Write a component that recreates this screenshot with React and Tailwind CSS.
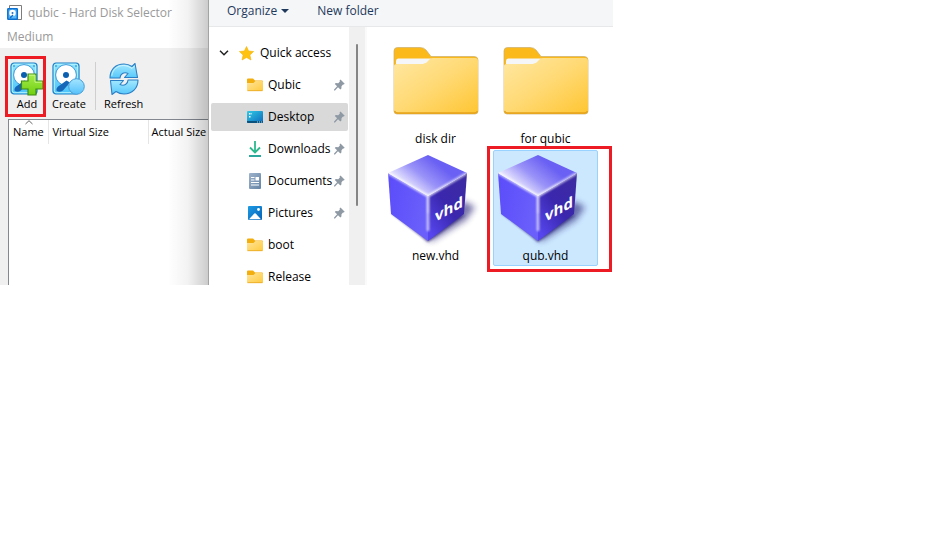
import { useId, useState } from "react";

function DiskGlyph() {
  return (
    <g>
      <rect x="1" y="1" width="26" height="31" rx="3" fill="url(#diskFace)" stroke="#1a7cc4" strokeWidth="1.2" />
      <rect x="2.3" y="2.3" width="23.4" height="28.4" rx="2" fill="none" stroke="#b5f4ff" strokeWidth="1" />
      <circle cx="14" cy="13" r="10.4" fill="#fff" stroke="#3e9bdc" strokeWidth="1" />
      <circle cx="14" cy="13" r="3" fill="#0b5fb0" />
      <path d="M14.5 18.5 18 20.5 11 28.5 Q7 31 4.5 28.5 Q4 25.5 7.5 23.5Z" fill="#1767b8" />
      <circle cx="4" cy="4" r=".7" fill="#0b62ae" />
      <circle cx="24" cy="4" r=".7" fill="#0b62ae" />
      <defs>
        <linearGradient id="diskFace" x1="0" y1="0" x2="0" y2="1">
          <stop offset="0" stopColor="#8fe6ff" />
          <stop offset="1" stopColor="#4cc3fa" />
        </linearGradient>
      </defs>
    </g>
  );
}

function AddIcon() {
  return (
    <svg width="34" height="34" viewBox="0 0 34 34" className="shrink-0" aria-hidden="true">
      <DiskGlyph />
      <path d="M18 12h8v7h7v8h-7v6h-8v-6h-6.500v-8H18Z" fill="url(#plus)" stroke="#3c8c14" strokeWidth="1.2" />
      <path d="M19 13.200h6v7h7" fill="none" stroke="#c9f78b" strokeWidth="1" />
      <defs>
        <linearGradient id="plus" x1="0" y1="0" x2="0" y2="1">
          <stop offset="0" stopColor="#a6ec4e" />
          <stop offset="1" stopColor="#6fd00f" />
        </linearGradient>
      </defs>
    </svg>
  );
}

function CreateIcon() {
  return (
    <svg width="34" height="34" viewBox="0 0 34 34" className="shrink-0" aria-hidden="true">
      <DiskGlyph />
      <circle cx="24.500" cy="24.500" r="7.800" fill="url(#ball)" stroke="#4a9fd8" strokeWidth="1" />
      <defs>
        <linearGradient id="ball" x1="0" y1="0" x2="0" y2="1">
          <stop offset="0" stopColor="#a5e6ff" />
          <stop offset="1" stopColor="#55c0fa" />
        </linearGradient>
      </defs>
    </svg>
  );
}

function RefreshIcon() {
  return (
    <svg width="34" height="34" viewBox="0 0 34 34" className="shrink-0" aria-hidden="true">
      <g fill="url(#arrows)" stroke="#2b7fc4" strokeWidth="1.1" strokeLinejoin="round">
        <path d="M3 16C3 7 9 2 17 2c3 0 5.500 .8 8 2.500L28 1.500 30.500 15.500H17.500l3.500-4c-4-2-8 .5-8 4.500Z" />
        <path d="M31 18C31 26.500 25 32 17 32c-3 0-5.500-.8-8-2.500L5 32.500 3.500 18.500H16.500L13 22.500c4 2 8-.5 8-4.500Z" />
      </g>
      <path d="M4.800 13.800C5.500 7.500 10.500 3.500 16.500 3.500c3.500 0 6 1.500 8.500 3l2.500-2.500" fill="none" stroke="#d6f6ff" strokeWidth=".9" />
      <defs>
        <linearGradient id="arrows" x1="0" y1="0" x2="0" y2="1">
          <stop offset="0" stopColor="#a5e9ff" />
          <stop offset="1" stopColor="#56c8fb" />
        </linearGradient>
      </defs>
    </svg>
  );
}

function AppIcon() {
  return (
    <svg width="16" height="17" viewBox="0 0 16 17" className="shrink-0" aria-hidden="true">
      <path d="M3.500.500h12v14h-12Z" fill="#fff" stroke="#7d7d7d" />
      <rect x="1.800" y="3.800" width="9.500" height="10.500" rx=".5" fill="#5db9f5" stroke="#0b6fd0" strokeWidth="1.500" />
      <circle cx="6.500" cy="8" r="3.200" fill="#fff" />
      <circle cx="6.500" cy="8" r="1" fill="#1b75d0" />
      <path d="M7 10 4 13" stroke="#0b6fd0" strokeWidth="1.500" />
    </svg>
  );
}

function SmallFolder() {
  return (
    <svg width="16" height="14" viewBox="0 0 16 14" className="shrink-0" aria-hidden="true">
      <path d="M0 1.500Q0 .500 1 .500H6L8 2.500H15Q16 2.500 16 3.500V12H0Z" fill="#f1ae0e" />
      <path d="M0 5H6.500L8.500 3H15Q16 3 16 4V12Q16 13 15 13H1Q0 13 0 12Z" fill="url(#smallFolder)" />
      <path d="M.500 12.700H15.500" stroke="#e7a620" strokeWidth=".8" />
      <defs>
        <linearGradient id="smallFolder" x1="0" y1="0" x2="1" y2="1">
          <stop offset="0" stopColor="#ffe49a" />
          <stop offset="1" stopColor="#ffca3e" />
        </linearGradient>
      </defs>
    </svg>
  );
}

function DesktopIcon() {
  return (
    <svg width="16" height="14" viewBox="0 0 16 14" className="shrink-0" aria-hidden="true">
      <rect y="1" width="16" height="12" rx="1" fill="url(#desktop)" />
      <path d="M2 3h1.500v1.500H2ZM2 6h1.500v1.500H2ZM4.500 3H5v1.500h-.500Z" fill="#fff" />
      <path d="M0 11H16V12Q16 13 15 13H1Q0 13 0 12Z" fill="#0c527f" />
      <path d="M10 12h1M12 12h1M14 12h1" stroke="#9bdcf5" />
      <defs>
        <linearGradient id="desktop" x1="0" y1="0" x2="1" y2="1">
          <stop offset="0" stopColor="#31cbe4" />
          <stop offset="1" stopColor="#0c69bd" />
        </linearGradient>
      </defs>
    </svg>
  );
}

function DownloadsIcon() {
  return (
    <svg width="16" height="16" viewBox="0 0 16 16" fill="none" className="shrink-0" aria-hidden="true">
      <path d="M8 0V11M3 6.500 8 11.500 13 6.500" stroke="#2cb98d" strokeWidth="1.800" />
      <path d="M2 15H14" stroke="#159f92" strokeWidth="1.800" />
    </svg>
  );
}

function DocumentsIcon() {
  return (
    <svg width="16" height="16" viewBox="0 0 16 16" className="shrink-0" aria-hidden="true">
      <rect x="2" width="12" height="16" rx="1" fill="url(#docs)" />
      <path d="M4 4.500h3.500M4 7h3.500M4 9.500h8M4 12h8" stroke="#fff" />
      <rect x="8.500" y="4" width="3.500" height="3.500" fill="#fff" />
      <defs>
        <linearGradient id="docs" x1="0" y1="0" x2="1" y2="1">
          <stop offset="0" stopColor="#9eb3cb" />
          <stop offset="1" stopColor="#6584a6" />
        </linearGradient>
      </defs>
    </svg>
  );
}

function PicturesIcon() {
  return (
    <svg width="16" height="16" viewBox="0 0 16 16" className="shrink-0" aria-hidden="true">
      <rect x="1" y="1" width="14" height="14" rx="1" fill="url(#pics)" />
      <path d="M2 14.200 7.300 8.600Q8 8 8.700 8.600L14 14.200Z" fill="#fff" />
      <circle cx="11.500" cy="4.500" r="1.400" fill="#fff" />
      <defs>
        <linearGradient id="pics" x1="0" y1="0" x2="1" y2="1">
          <stop offset="0" stopColor="#1d9be4" />
          <stop offset="1" stopColor="#0763b8" />
        </linearGradient>
      </defs>
    </svg>
  );
}

function StarIcon() {
  return (
    <svg width="15" height="15" viewBox="0 0 15 15" className="shrink-0" aria-hidden="true">
      <path d="M7.500.500 9.600 5 14.600 5.500 10.900 9 12 14 7.500 11.500 3 14 4.100 9 .400 5.500 5.400 5Z" fill="#ffc20e" stroke="#f2b30b" strokeWidth=".6" />
    </svg>
  );
}

function PinIcon() {
  return (
    <svg width="11" height="12" viewBox="0 0 11 12" className="shrink-0" aria-hidden="true">
      <path d="M6.500.500 10.700 4.700 9.800 5.600 9 5.500 7.500 7.300 7.400 9.600 6.400 10.400 4 8.200 1 11.400 0 11.600.100 10.600 3.100 7.300.800 5.100 1.700 4.100 4.200 4.200 5.900 2.500 5.600 1.400Z" fill="#8e99a4" />
    </svg>
  );
}

function BigFolder() {
  return (
    <svg width="96" height="96" viewBox="0 0 96 96" className="shrink-0" aria-hidden="true">
      <path d="M6 17Q6 13.500 9.500 13.500H32Q36 13.500 38 16L43 22.500H86Q90 22.500 90 26V77Q90 80 87 80H9Q6 80 6 77Z" fill="#fbb91a" stroke="#c9ae70" strokeWidth=".7" />
      <path d="M8 27Q8 24.500 10 24.500H43Q40 30 35 30H8Z" fill="#f5f6f8" />
      <path d="M6 32Q6 30 9 30H35Q38 30 40 27L42 25Q43 24 45 24H87Q90 24 90 27V76Q90 79 87 79H9Q6 79 6 76Z" fill="url(#bigFolder)" />
      <path d="M6.500 77Q7.500 79 9.500 79H86.500Q88.500 79 89.500 77" fill="none" stroke="#e6a31b" strokeWidth="1.400" />
      <defs>
        <linearGradient id="bigFolder" x1="0" y1="0" x2="1" y2="1">
          <stop offset="0" stopColor="#ffe8a3" />
          <stop offset=".5" stopColor="#ffd973" />
          <stop offset="1" stopColor="#ffc633" />
        </linearGradient>
      </defs>
    </svg>
  );
}

function VhdCube() {
  const id = useId();
  const ref = (name) => `url(#${id}${name})`;
  return (
    <svg width="96" height="96" viewBox="0 0 96 96" className="shrink-0" aria-hidden="true">
      <defs>
        <linearGradient id={id + "top"} gradientUnits="userSpaceOnUse" x1="20" y1="38" x2="44" y2="8">
          <stop offset="0" stopColor="#f1efff" />
          <stop offset=".5" stopColor="#9a93f8" />
          <stop offset="1" stopColor="#6a60f3" />
        </linearGradient>
        <linearGradient id={id + "left"} x1="0" y1="0" x2="1" y2=".3">
          <stop offset="0" stopColor="#5b4cfa" />
          <stop offset="1" stopColor="#6a5ffb" />
        </linearGradient>
        <linearGradient id={id + "right"} x1="1" y1="0" x2=".2" y2="1">
          <stop offset="0" stopColor="#3c2ba0" />
          <stop offset=".55" stopColor="#3a27ae" />
          <stop offset="1" stopColor="#5646ed" />
        </linearGradient>
        <filter id={id + "blur"} x="-30%" y="-30%" width="160%" height="160%">
          <feGaussianBlur stdDeviation="3" />
        </filter>
        <filter id={id + "soft"} x="-30%" y="-30%" width="160%" height="160%">
          <feGaussianBlur stdDeviation="1.2" />
        </filter>
        <clipPath id={id + "body"}>
          <path d="M40 4 79 22 76 63 40 90 3 63 0 22Z" />
        </clipPath>
      </defs>
      <path d="M76 50 87 56 78 69 44 90 38 88Z" fill="#231a72" opacity=".6" filter={ref("blur")} />
      <path d="M3 62 40 91 77 64 40 70Z" fill="#231a72" opacity=".7" filter={ref("soft")} />
      <path d="M0 22 40 45V90L3 63Z" fill={ref("left")} />
      <path d="M79 22 40 45V90L76 63Z" fill={ref("right")} />
      <path d="M40 4 79 22 40 45 0 22Z" fill={ref("top")} />
      <g clipPath={ref("body")}>
        <path d="M0 22 40 45 79 22M40 45V80" fill="none" stroke="#fff" strokeWidth="2.500" opacity=".7" filter={ref("soft")} />
        <path d="M20 33.500 40 45 60 33M40 45V62" fill="none" stroke="#fff" strokeWidth="1" opacity=".6" filter={ref("soft")} />
      </g>
      <text transform="translate(47 71) skewY(-29)" fill="#fff" fontFamily="Open Sans, sans-serif" fontSize="15" fontWeight="700">
        vhd
      </text>
    </svg>
  );
}

const places = [
  { label: "Qubic", Icon: SmallFolder, pinned: true },
  { label: "Desktop", Icon: DesktopIcon, pinned: true },
  { label: "Downloads", Icon: DownloadsIcon, pinned: true },
  { label: "Documents", Icon: DocumentsIcon, pinned: true },
  { label: "Pictures", Icon: PicturesIcon, pinned: true },
  { label: "boot", Icon: SmallFolder },
  { label: "Release", Icon: SmallFolder },
];

const files = [
  { name: "disk dir", Icon: BigFolder },
  { name: "for qubic", Icon: BigFolder },
  { name: "new.vhd", Icon: VhdCube },
  { name: "qub.vhd", Icon: VhdCube, marked: true },
];

function ToolButton({ label, Icon }) {
  return (
    <button className="flex flex-col items-center text-[11px]">
      <Icon />
      <span className="leading-4">{label}</span>
    </button>
  );
}

function SelectorWindow() {
  return (
    <section className="relative flex w-[208px] shrink-0 flex-col overflow-hidden bg-[#f0f0f0]">
      <header className="flex h-[26px] shrink-0 items-center gap-1.5 bg-white pl-1.5 text-[#999]">
        <AppIcon />
        <h1 className="whitespace-nowrap">qubic - Hard Disk Selector</h1>
      </header>
      <nav className="flex h-[22px] shrink-0 items-center bg-white pl-[7px] text-[#999]">
        <button>Medium</button>
      </nav>
      <div className="flex h-[71px] shrink-0 pt-3.5">
        <div className="relative w-[46px] pl-2.5">
          <ToolButton label="Add" Icon={AddIcon} />
          <div className="pointer-events-none absolute -top-1.5 left-[5px] h-[61px] w-[41px] border-3 border-[#ed1c24]" />
        </div>
        <div className="w-12 pl-1.5">
          <ToolButton label="Create" Icon={CreateIcon} />
        </div>
        <div className="ml-px h-12 w-px bg-[#cfcfcf]" />
        <div className="pl-2">
          <ToolButton label="Refresh" Icon={RefreshIcon} />
        </div>
      </div>
      <div className="ml-2 flex-1 border-t border-l border-[#828790] bg-white">
        <table className="w-full table-fixed">
          <thead>
            <tr className="h-6 text-left text-[11px] whitespace-nowrap">
              <th className="relative w-[39px] border-r border-[#e5e5e5] pl-1 font-normal">
                <svg width="8" height="5" viewBox="0 0 8 5" className="absolute top-0 left-4" aria-hidden="true">
                  <path d="M.5 4 4 .700 7.500 4" fill="none" stroke="#666" />
                </svg>
                Name
              </th>
              <th className="w-[100px] border-r border-[#e5e5e5] pl-1 font-normal">Virtual Size</th>
              <th className="pl-[3px] font-normal">Actual Size</th>
            </tr>
          </thead>
        </table>
      </div>
      <div className="pointer-events-none absolute inset-y-0 right-0 w-10 bg-linear-to-r from-transparent via-black/5 to-black/20" />
    </section>
  );
}

function FileDialog() {
  const [place, setPlace] = useState("Desktop");
  const [file, setFile] = useState("qub.vhd");
  return (
    <section className="flex min-w-0 flex-1 flex-col border-l border-[#a3a3a3] bg-white">
      <div className="flex h-[27px] shrink-0 items-center gap-7 border-b border-[#e6e8ea] bg-[#f5f6f8] pb-1 pl-[18px] text-[#1e395b]">
        <button className="flex items-center gap-1">
          Organize
          <svg width="8" height="4" viewBox="0 0 8 4" aria-hidden="true">
            <path d="M0 0H8L4 4Z" fill="#1e395b" />
          </svg>
        </button>
        <button>New folder</button>
      </div>
      <div className="flex min-h-0 flex-1">
        <nav className="flex w-[140px] shrink-0 flex-col pt-2.5 pl-0.5">
          <button className="flex h-8 w-full shrink-0 items-center pl-2">
            <svg width="10" height="6" viewBox="0 0 10 6" fill="none" aria-hidden="true">
              <path d="M1 .800 5 4.800 9 .800" stroke="#222" strokeWidth="1.500" />
            </svg>
            <span className="pl-2.5">
              <StarIcon />
            </span>
            <span className="pl-1.5">Quick access</span>
          </button>
          {places.map(({ label, Icon, pinned }) => (
            <button
              key={label}
              onClick={() => setPlace(label)}
              className={`my-0.5 flex h-7 w-[137px] shrink-0 items-center gap-[5px] rounded-xs pr-[3px] pl-9 ${place === label ? "bg-[#d9d9d9]" : ""}`}
            >
              <Icon />
              <span className="min-w-0 flex-1 text-left">{label}</span>
              {pinned && <PinIcon />}
            </button>
          ))}
        </nav>
        <div className="w-4 shrink-0 bg-[#f0f0f0] pt-[17px] pl-[7px]">
          <div className="h-[162px] w-0.5 rounded-full bg-[#858585]" />
        </div>
        <div className="min-w-0 flex-1 border-l-2 border-[#fafafa] pt-1.5 pl-4">
          <div className="grid w-fit grid-cols-2 gap-x-[5px] gap-y-px">
            {files.map(({ name, Icon, marked }) => (
              <div key={name} className="relative">
                <button
                  onClick={() => setFile(name)}
                  className={`flex h-[116px] w-[105px] flex-col items-center justify-between rounded-xs border pb-px ${
                    file === name ? "border-[#99d1ff] bg-[#cce8ff]" : "border-transparent"
                  }`}
                >
                  <Icon />
                  <span className="leading-4">{name}</span>
                </button>
                {marked && (
                  <div className="pointer-events-none absolute -top-1 -left-1.5 h-[126px] w-[125px] border-3 border-[#ed1c24]" />
                )}
              </div>
            ))}
          </div>
        </div>
      </div>
    </section>
  );
}

export default function App() {
  return (
    <main className="min-h-screen bg-white font-['Open_Sans','Noto_Sans',sans-serif] text-xs text-black">
      <div className="flex h-[285px] w-full max-w-[613px] overflow-hidden">
        <SelectorWindow />
        <FileDialog />
      </div>
    </main>
  );
}
